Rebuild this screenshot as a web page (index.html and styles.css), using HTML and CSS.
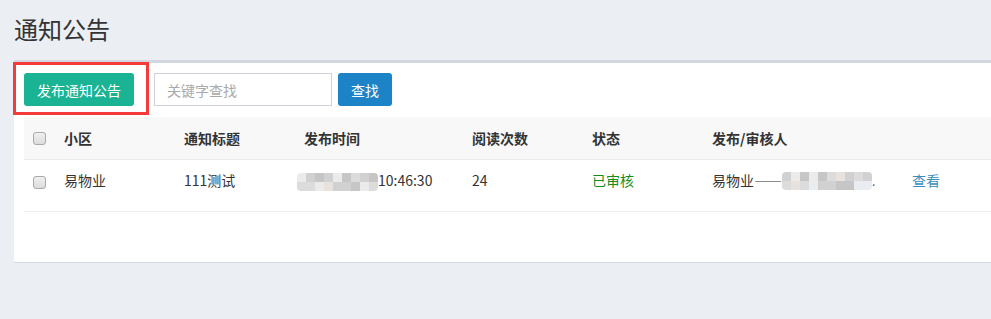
FILE: index.html
```html
<!DOCTYPE html>
<html lang="zh-CN">
<head>
<meta charset="utf-8">
<title>通知公告</title>
<link rel="stylesheet" href="styles.css">
</head>
<body>
<h1 class="page-title">通知公告</h1>
<div class="panel">
  <div class="toolbar">
    <button class="btn btn-green">发布通知公告</button>
    <input class="search" type="text" placeholder="关键字查找">
    <button class="btn btn-blue">查找</button>
  </div>
  <div class="table">
    <div class="row head">
      <div class="cell chk"><span class="checkbox"></span></div>
      <div class="cell">小区</div>
      <div class="cell">通知标题</div>
      <div class="cell">发布时间</div>
      <div class="cell">阅读次数</div>
      <div class="cell">状态</div>
      <div class="cell">发布/审核人</div>
      <div class="cell"></div>
    </div>
    <div class="row body">
      <div class="cell chk"><span class="checkbox"></span></div>
      <div class="cell">易物业</div>
      <div class="cell">111测试</div>
      <div class="cell"><span class="mosaic date-mosaic"><i class="c1"></i><i class="c2"></i><i class="c3"></i><i class="c2"></i><i class="c4"></i><i class="c1"></i><i class="c3"></i><i class="c5"></i><i class="c1"></i><i class="c3"></i><i class="c4"></i><i class="c3"></i><i class="c2"></i><i class="c4"></i><i class="c3"></i><i class="c1"></i><i class="c4"></i><i class="c2"></i></span>10:46:30</div>
      <div class="cell">24</div>
      <div class="cell status">已审核</div>
      <div class="cell">易物业——<span class="mosaic user-mosaic"><i class="c3"></i><i class="c2"></i><i class="c1"></i><i class="c5"></i><i class="c4"></i><i class="c2"></i><i class="c1"></i><i class="c6"></i><i class="c4"></i><i class="c3"></i><i class="c2"></i><i class="c3"></i><i class="c5"></i><i class="c4"></i><i class="c3"></i><i class="c4"></i><i class="c2"></i><i class="c6"></i><i class="c3"></i><i class="c6"></i></span><span class="dot">.</span></div>
      <div class="cell"><a class="link" href="#">查看</a></div>
    </div>
  </div>
</div>
<div class="highlight"></div>
</body>
</html>
```
FILE: styles.css
```css
* { box-sizing: border-box; }
html, body { margin: 0; padding: 0; }
body {
  background: #ebeef3;
  font-family: "Noto Sans CJK SC", "Noto Sans", sans-serif;
  color: #333;
  font-size: 14px;
  overflow: hidden;
}
.page-title {
  margin: 0;
  padding: 13px 0 0 14px;
  height: 60px;
  font-size: 24px;
  font-weight: normal;
  line-height: 32px;
  color: #333;
}
.panel {
  margin-left: 14px;
  width: 1000px;
  background: #fff;
  border-top: 3px solid #d3d8e0;
  border-bottom: 1px solid #d6dbe2;
  padding: 10px 10px 50px 10px;
}
.toolbar {
  display: flex;
  align-items: center;
  height: 33px;
  margin-bottom: 11px;
}
.btn {
  height: 33px;
  border: none;
  border-radius: 3px;
  color: #fff;
  font-family: inherit;
  font-size: 14px;
  padding: 0;
  cursor: pointer;
}
.btn-green { background: #1ab394; width: 110px; margin-right: 20px; }
.btn-blue { background: #1c84c6; width: 54px; margin-left: 6px; }
.search {
  width: 178px;
  height: 33px;
  border: 1px solid #cfd3db;
  padding: 0 12px;
  font-family: inherit;
  font-size: 14px;
  outline: none;
}
.search::placeholder { color: #a9a9a9; }
.table { width: 100%; }
.row {
  display: grid;
  grid-template-columns: 40px 120px 120px 168px 120px 120px 200px 1fr;
  border-bottom: 1px solid #ececec;
}
.row.head {
  background: #f8f8f8;
  height: 43px;
  font-weight: bold;
  align-items: center;
}
.row.body {
  height: 52px;
  padding-top: 10px;
}
.cell { display: flex; align-items: center; height: 20px; white-space: nowrap; color: #333; }
.chk { padding-left: 9px; }
.checkbox {
  display: inline-block;
  width: 13px;
  height: 13px;
  border: 1px solid #a9a9a9;
  border-radius: 3px;
  background: linear-gradient(#f0f0f0, #dcdcdc);
}
.row.body .chk { margin-top: 2px; }
.cell.status { color: #178a17; }
.link { color: #3c8dbc; text-decoration: none; }
.mosaic {
  display: inline-grid;
  grid-auto-flow: column;
  grid-template-rows: 9px 9px;
  height: 18px;
  border-radius: 4px;
  overflow: hidden;
}
.mosaic i { display: block; width: 9px; height: 9px; }
.date-mosaic { margin-left: -7px; margin-top: 4px; grid-template-columns: repeat(9, 9px); }
.user-mosaic { grid-template-columns: repeat(10, 9px); margin-top: 2px; }
.c1 { background: #ebebeb; }
.c2 { background: #dcdcdc; }
.c3 { background: #d1d1d1; }
.c4 { background: #c6c6c6; }
.c5 { background: #e8e2de; }
.c6 { background: #e9edf1; }
.dot { color: #556; font-size: 12px; }
.highlight {
  position: absolute;
  left: 13px;
  top: 62px;
  width: 136px;
  height: 53px;
  border: 3px solid #f53a3a;
}
```
